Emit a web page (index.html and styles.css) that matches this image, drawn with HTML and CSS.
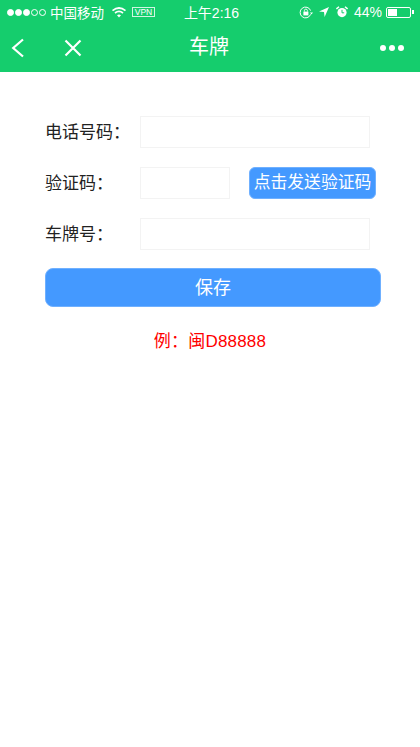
FILE: index.html
```html
<!DOCTYPE html>
<html lang="zh-CN">
<head>
    <meta charset="UTF-8">
    <meta name="viewport" content="width=device-width, initial-scale=1.0">
    <title>车牌</title>
    <link rel="stylesheet" href="styles.css">
</head>
<body>
    <header class="top">
        <div class="status">
            <div class="status-left">
                <span class="signal"><i></i><i></i><i></i><i class="off"></i><i class="off"></i></span>
                <span class="carrier">中国移动</span>
                <svg class="wifi" width="14" height="11" viewBox="0 0 14 11">
                    <path d="M0.5 3.6 Q7 -1.6 13.5 3.6" fill="none" stroke="#fff" stroke-width="1.7"/>
                    <path d="M3 6 Q7 2.8 11 6" fill="none" stroke="#fff" stroke-width="1.7"/>
                    <path d="M5 8.2 Q7 6.8 9 8.2 L7 10.4 Z" fill="#fff"/>
                </svg>
                <span class="vpn">VPN</span>
            </div>
            <div class="clock">上午2:16</div>
            <div class="status-right">
                <svg class="lock" width="14" height="13" viewBox="0 0 14 13">
                    <path d="M11.6 8.4 A5.4 5.4 0 1 1 11.6 4.6" fill="none" stroke="#fff" stroke-width="1"/>
                    <path d="M11 6.6 L14 6.6 L12.5 8.6 Z" fill="#fff"/>
                    <rect x="4.4" y="5.6" width="5" height="3.8" fill="#fff"/>
                    <path d="M5.4 5.6 V4.6 A1.5 1.5 0 0 1 8.4 4.6 V5.6" fill="none" stroke="#fff" stroke-width="0.9"/>
                </svg>
                <svg class="arrow" width="10" height="10" viewBox="0 0 10 10">
                    <path d="M10 0 L0 4.4 L5 5 L5.6 10 Z" fill="#fff"/>
                </svg>
                <svg class="alarm" width="12" height="12" viewBox="0 0 12 12">
                    <circle cx="6" cy="6.6" r="4.6" fill="#fff"/>
                    <path d="M6 3.8 V6.8 H8.2" fill="none" stroke="#15cd6d" stroke-width="1"/>
                    <path d="M0.4 3 L3 0.8 M11.6 3 L9 0.8" stroke="#fff" stroke-width="1.5"/>
                </svg>
                <span class="percent">44%</span>
                <span class="battery"><span class="battery-fill"></span></span>
                <span class="battery-tip"></span>
            </div>
        </div>
        <nav class="nav">
            <div class="nav-left">
                <svg width="15" height="20" viewBox="0 0 15 20">
                    <path d="M13 1.5 L3.2 10 L13 18.5" fill="none" stroke="#fff" stroke-width="2.2"/>
                </svg>
                <svg class="close" width="18" height="18" viewBox="0 0 18 18">
                    <path d="M1.5 1.5 L16.5 16.5 M16.5 1.5 L1.5 16.5" fill="none" stroke="#fff" stroke-width="2.2"/>
                </svg>
            </div>
            <h1>车牌</h1>
            <div class="more"><i></i><i></i><i></i></div>
        </nav>
    </header>

    <main class="form">
        <div class="row">
            <label for="phone">电话号码：</label>
            <input type="text" id="phone" class="field">
        </div>
        <div class="row">
            <label for="code">验证码：</label>
            <input type="text" id="code" class="field field-short">
            <button class="send">点击发送验证码</button>
        </div>
        <div class="row">
            <label for="plate">车牌号：</label>
            <input type="text" id="plate" class="field">
        </div>
        <button class="save">保存</button>
        <p class="hint">例：闽D88888</p>
    </main>
</body>
</html>
```

FILE: styles.css
```css
* {
    box-sizing: border-box;
}
body {
    margin: 0;
    background-color: #fff;
    font-family: "Liberation Sans", "Noto Sans CJK SC", sans-serif;
    color: #222;
}
.top {
    height: 72px;
    background-color: #15cd6d;
    color: #fff;
}
.status {
    height: 24px;
    padding: 0 6px 0 7px;
    display: flex;
    align-items: center;
    justify-content: space-between;
    font-size: 13.5px;
}
.status-left, .status-right {
    display: flex;
    align-items: center;
    flex: 1;
}
.status-right {
    justify-content: flex-end;
}
.signal {
    display: flex;
    gap: 1px;
}
.signal i {
    width: 7px;
    height: 7px;
    border-radius: 50%;
    background-color: #fff;
    border: 1px solid #fff;
}
.signal i.off {
    background-color: transparent;
    border-width: 0.5px;
}
.carrier {
    margin-left: 4px;
}
.wifi {
    margin-left: 8px;
}
.vpn {
    width: 23px;
    margin-left: 6px;
    border: 1px solid rgba(255,255,255,0.8);
    font-size: 8.5px;
    line-height: 8px;
    text-align: center;
}
.clock {
    padding-left: 2px;
    font-size: 14px;
}
.arrow {
    margin-left: 6px;
}
.alarm {
    margin-left: 7px;
}
.percent {
    margin-left: 6px;
    font-size: 14px;
}
.battery {
    width: 25px;
    height: 11px;
    margin-left: 4px;
    border: 1px solid #fff;
    border-radius: 2px;
    padding: 1px;
    display: block;
}
.battery-fill {
    display: block;
    width: 44%;
    height: 100%;
    background-color: #fff;
}
.battery-tip {
    width: 2px;
    height: 4px;
    margin-left: 1px;
    background-color: #fff;
}
.nav {
    height: 48px;
    padding: 0 16px 0 10px;
    display: flex;
    align-items: center;
    justify-content: space-between;
    position: relative;
}
.nav-left {
    display: flex;
    align-items: center;
}
.close {
    margin-left: 39px;
}
.nav h1 {
    position: absolute;
    left: 0;
    right: 0;
    margin: 0;
    padding: 0 2px 5px 0;
    text-align: center;
    font-size: 20px;
    font-weight: 400;
}
.more {
    display: flex;
    gap: 3px;
}
.more i {
    width: 6px;
    height: 6px;
    border-radius: 50%;
    background-color: #fff;
}
.form {
    padding: 44px 39px 0 45px;
}
.row {
    height: 32px;
    margin-bottom: 19px;
    display: flex;
    align-items: center;
}
.row label {
    width: 95px;
    padding-bottom: 4px;
    font-size: 17px;
    white-space: nowrap;
}
.field {
    width: 230px;
    height: 32px;
    border: 1px solid #f3f3f3;
    background-color: #fff;
    outline: none;
}
.field-short {
    width: 90px;
}
.send {
    width: 127px;
    height: 32px;
    margin-left: 19px;
    padding: 0 0 4px;
    border: 1px solid #6fb0ff;
    border-radius: 6px;
    background-color: #4499ff;
    color: #fff;
    font-family: inherit;
    font-size: 16.8px;
    white-space: nowrap;
}
.save {
    display: block;
    width: 336px;
    height: 39px;
    margin-top: -1px;
    padding: 0 0 4px;
    border: 1px solid #6fb0ff;
    border-radius: 8px;
    background-color: #4499ff;
    color: #fff;
    font-family: inherit;
    font-size: 18px;
}
.hint {
    margin: 23px 0 0;
    padding-right: 6px;
    text-align: center;
    font-size: 17px;
    letter-spacing: 0.2px;
    line-height: 24px;
    color: #f00;
}
```
